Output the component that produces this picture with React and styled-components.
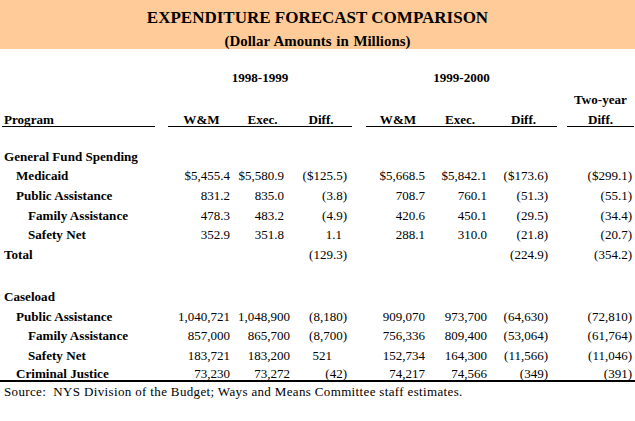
import React from "react";
import styled, { createGlobalStyle } from "styled-components";

const GlobalStyle = createGlobalStyle`
  body {
    margin: 0;
    background: #fff;
    font-family: "Liberation Serif", "Times New Roman", serif;
    color: #000;
  }
`;

const Page = styled.div`
  width: 635px;
`;

const Banner = styled.div`
  height: 49px;
  background: #ffcc99;
  display: flex;
  flex-direction: column;
  align-items: center;
  padding-top: 8px;
  box-sizing: border-box;
`;

const Title = styled.div`
  font-size: 17px;
  font-weight: bold;
  line-height: 20px;
`;

const Subtitle = styled.div`
  font-size: 14.9px;
  font-weight: bold;
  line-height: 18px;
  margin-top: 4px;
  word-spacing: 1px;
`;

const HeaderArea = styled.div`
  display: grid;
  grid-template-columns: 160px 192px 205px 78px;
  margin-top: 19px;
`;

const Group = styled.div`
  display: grid;
  grid-template-rows: 20px 22px 17px;
  padding-left: ${(p) => p.$left || 0}px;
  padding-right: ${(p) => p.$right || 0}px;
`;

const YearLabel = styled.div`
  font-size: 13.1px;
  font-weight: bold;
  line-height: 20px;
  text-align: center;
`;

const TopLabel = styled(YearLabel)`
  align-self: end;
`;

const LabelRow = styled.div`
  display: grid;
  grid-template-columns: ${(p) => p.$cols};
  border-bottom: 1px solid #000;
`;

const HeadCell = styled.div`
  font-size: 13.1px;
  font-weight: bold;
  line-height: 15px;
  padding-top: 2px;
  text-align: ${(p) => (p.$left ? "left" : "center")};
  padding-left: ${(p) => (p.$left ? 2 : 0)}px;
`;

const Section = styled.div`
  margin-top: ${(p) => p.$top}px;
`;

const Row = styled.div`
  display: grid;
  grid-template-columns: 160px 75px 55px 62px 78px 60px 67px 78px;
  height: ${(p) => p.$h || 19.6}px;
  align-items: center;
  font-size: 13px;
`;

const Label = styled.div`
  font-size: 13.1px;
  font-weight: bold;
  padding-left: ${(p) => 4 + p.$level * 12}px;
  white-space: nowrap;
`;

const Num = styled.div`
  text-align: right;
  padding-right: ${(p) => p.$pad}px;
  white-space: nowrap;
`;

const Rule = styled.div`
  height: 2px;
  background: #000;
`;

const Source = styled.div`
  font-size: 13px;
  line-height: 16px;
  padding: 2px 0 0 4px;
  letter-spacing: 0.35px;
`;

const pads = [5, 6, 5, 5, 3, 9, 3];

const spending = [
  { label: "Medicaid", level: 1, v: ["$5,455.4", "$5,580.9", "($125.5)", "$5,668.5", "$5,842.1", "($173.6)", "($299.1)"] },
  { label: "Public Assistance", level: 1, v: ["831.2", "835.0", "(3.8)", "708.7", "760.1", "(51.3)", "(55.1)"] },
  { label: "Family Assistance", level: 2, v: ["478.3", "483.2", "(4.9)", "420.6", "450.1", "(29.5)", "(34.4)"] },
  { label: "Safety Net", level: 2, v: ["352.9", "351.8", "1.1", "288.1", "310.0", "(21.8)", "(20.7)"], shift: { 2: 5 } },
  { label: "Total", level: 0, v: ["", "", "(129.3)", "", "", "(224.9)", "(354.2)"] },
];

const caseload = [
  { label: "Public Assistance", level: 1, v: ["1,040,721", "1,048,900", "(8,180)", "909,070", "973,700", "(64,630)", "(72,810)"] },
  { label: "Family Assistance", level: 2, v: ["857,000", "865,700", "(8,700)", "756,336", "809,400", "(53,064)", "(61,764)"] },
  { label: "Safety Net", level: 2, v: ["183,721", "183,200", "521", "152,734", "164,300", "(11,566)", "(11,046)"], shift: { 2: 15 } },
  { label: "Criminal Justice", level: 1, h: 14, v: ["73,230", "73,272", "(42)", "74,217", "74,566", "(349)", "(391)"] },
];

function DataRow({ row, execPad }) {
  return (
    <Row $h={row.h}>
      <Label $level={row.level}>{row.label}</Label>
      {row.v.map((val, i) => {
        let pad = i === 1 ? execPad : pads[i];
        if (row.shift && row.shift[i]) pad += row.shift[i];
        return (
          <Num key={i} $pad={pad}>
            {val}
          </Num>
        );
      })}
    </Row>
  );
}

export default function App() {
  return (
    <Page>
      <GlobalStyle />
      <Banner>
        <Title>EXPENDITURE FORECAST COMPARISON</Title>
        <Subtitle>(Dollar Amounts in Millions)</Subtitle>
      </Banner>

      <HeaderArea>
        <Group $left={2} $right={5}>
          <div />
          <div />
          <LabelRow $cols="1fr">
            <HeadCell $left>Program</HeadCell>
          </LabelRow>
        </Group>
        <Group $left={8}>
          <YearLabel>1998-1999</YearLabel>
          <div />
          <LabelRow $cols="67px 55px 62px">
            <HeadCell>W&amp;M</HeadCell>
            <HeadCell>Exec.</HeadCell>
            <HeadCell>Diff.</HeadCell>
          </LabelRow>
        </Group>
        <Group $left={14}>
          <YearLabel>1999-2000</YearLabel>
          <div />
          <LabelRow $cols="64px 60px 67px">
            <HeadCell>W&amp;M</HeadCell>
            <HeadCell>Exec.</HeadCell>
            <HeadCell>Diff.</HeadCell>
          </LabelRow>
        </Group>
        <Group $left={10} $right={1}>
          <div />
          <TopLabel>Two-year</TopLabel>
          <LabelRow $cols="1fr">
            <HeadCell>Diff.</HeadCell>
          </LabelRow>
        </Group>
      </HeaderArea>

      <Section $top={20}>
        <Row>
          <Label $level={0}>General Fund Spending</Label>
        </Row>
        {spending.map((r, i) => (
          <DataRow key={i} row={r} execPad={6} />
        ))}
      </Section>

      <Section $top={22.6}>
        <Row>
          <Label $level={0}>Caseload</Label>
        </Row>
        {caseload.map((r, i) => (
          <DataRow key={i} row={r} execPad={0} />
        ))}
      </Section>
      <Rule />
      <Source>
        Source:&nbsp; NYS Division of the Budget; Ways and Means Committee staff estimates.
      </Source>
    </Page>
  );
}
